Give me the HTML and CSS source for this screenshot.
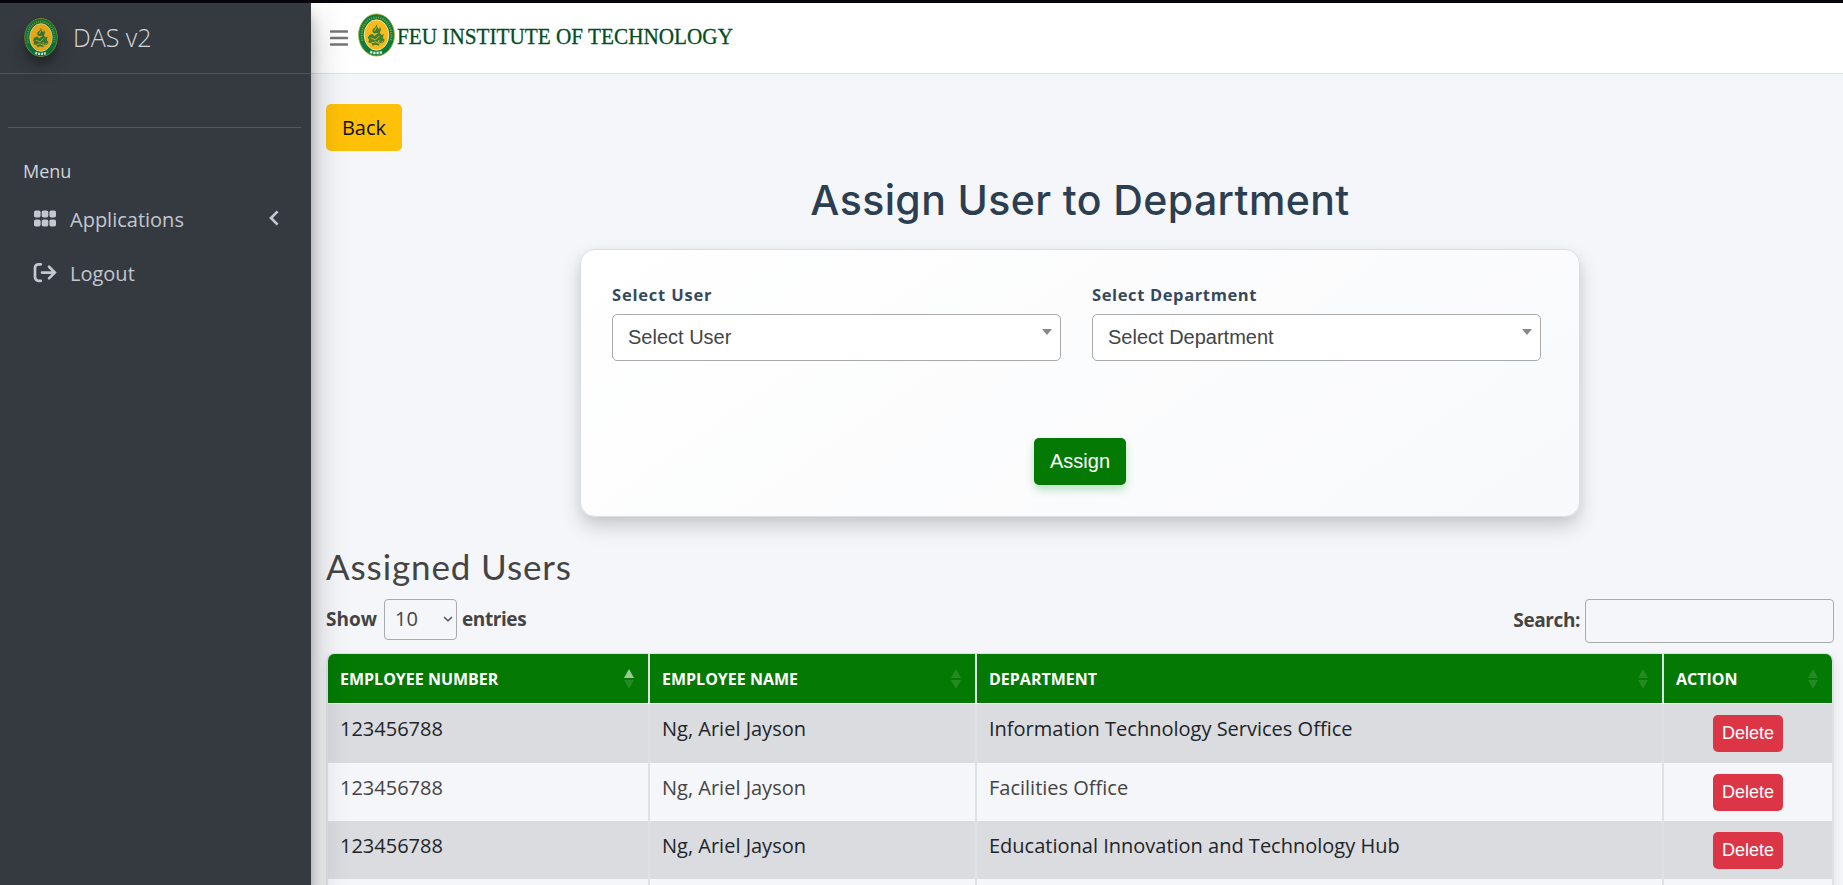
FILE: index.html
```html
<!DOCTYPE html>
<html lang="en">
<head>
<meta charset="utf-8">
<title>DAS v2</title>
<link rel="stylesheet" href="styles.css">
</head>
<body>
<svg width="0" height="0" class="defs">
  <symbol id="seal" viewBox="0 0 38 44">
    <ellipse cx="19" cy="22" rx="18.400" ry="21.600" fill="#0b7d3f" stroke="#a9a52b" stroke-width=".8"/>
    <path d="M4.500 28C1.500 16 8 4 19 4s17.500 12 14.500 24" fill="none" stroke="#b5a72c" stroke-width="2.200" stroke-dasharray="1.300 1.100" opacity=".7"/>
    <ellipse cx="19" cy="22" rx="12.600" ry="15.600" fill="#fbb91a" stroke="#f3e6a0" stroke-width="1"/>
    <path d="M18.500 11c2 2 1 4 3 5 1-1 1-2 .5-3 2.500 3 1.500 5.500-.5 7l-5 .500c-3-2-1.500-5 .5-6 1.500-1 1.500-1.500 1.500-3.500z" fill="#3c8235"/>
    <path d="M11.500 22l3.500-1 2 2 5-4 2 3 2.500-1-1 4 2 2-2 3.500h-3l-1 2.500-3.500-1-3 1-1-2.500-3.500-1 1-2.500-1.500-2z" fill="#3c8235"/>
    <path d="M13 25l5 2 4-4M14 30l4-1 4 2M19 14l-2 4M22 27a2 2 0 1 0 3 1" stroke="#f0b41c" fill="none"/>
    <path d="M12.500 39.300q6.500 2.400 13 0" stroke="#e4efd9" stroke-width="2.600" stroke-dasharray="2.300 1" fill="none"/>
  </symbol>
</svg>
<div class="topline"></div>
<div class="app">
  <aside class="sidebar">
    <div class="brand"><svg class="brand-seal"><use href="#seal"/></svg><span class="brand-name">DAS v2</span></div>
    <div class="user-panel"></div>
    <div class="menu-head">Menu</div>
    <nav class="menu">
      <a class="menu-item">
        <svg class="mi" viewBox="0 0 25 25"><g fill="#c2c7d0"><rect x="2" y="3.500" width="6.600" height="7" rx="1.800"/><rect x="9.700" y="3.500" width="6.600" height="7" rx="1.800"/><rect x="17.400" y="3.500" width="6.600" height="7" rx="1.800"/><rect x="2" y="12.500" width="6.600" height="7" rx="1.800"/><rect x="9.700" y="12.500" width="6.600" height="7" rx="1.800"/><rect x="17.400" y="12.500" width="6.600" height="7" rx="1.800"/></g></svg>
        <span>Applications</span>
        <svg class="chev" viewBox="0 0 10 16"><path d="M8.600 1.400L2 8l6.600 6.600" fill="none" stroke="#c2c7d0" stroke-width="2.700"/></svg>
      </a>
      <a class="menu-item">
        <svg class="mi" viewBox="0 0 25 25"><g fill="none" stroke="#c2c7d0" stroke-width="2.700" stroke-linecap="round"><path d="M8.800 3.300H6.500A3.500 3.500 0 0 0 3 6.800v9.500a3.500 3.500 0 0 0 3.500 3.500h2.300"/><path d="M10 11.600h12M17 5.800l5.800 5.800L17 17.400"/></g></svg>
        <span>Logout</span>
      </a>
    </nav>
  </aside>
  <div class="page">
    <header class="navbar">
      <svg class="burger" viewBox="0 0 18 16"><path d="M1 1.500h16M1 8h16M1 14.500h16" stroke="#757575" stroke-width="2.600" stroke-linecap="round"/></svg>
      <svg class="nav-seal"><use href="#seal"/></svg>
      <svg class="wordmark" viewBox="0 0 344 40"><text x="0" y="29" textLength="336" lengthAdjust="spacingAndGlyphs">FEU INSTITUTE OF TECHNOLOGY</text></svg>
    </header>
    <main class="content">
      <button class="btn-back">Back</button>
      <h2 class="title">Assign User to Department</h2>
      <section class="card">
        <div class="fields">
          <div class="field"><label class="label">Select User</label><div class="select2"><span>Select User</span><i class="caret"></i></div></div>
          <div class="field"><label class="label dept">Select Department</label><div class="select2"><span>Select Department</span><i class="caret"></i></div></div>
        </div>
        <button class="btn-assign">Assign</button>
      </section>
      <h3 class="subtitle">Assigned Users</h3>
      <div class="controls">
        <div class="length"><span class="show">Show</span><div class="pick"><span>10</span><svg width="10" height="6" viewBox="0 0 10 6"><path d="M1 1l4 3.800L9 1" fill="none" stroke="#495057" stroke-width="1.400"/></svg></div><span class="entries">entries</span></div>
        <div class="search"><span>Search:</span><input class="search-input" type="text"></div>
      </div>
      <div class="table">
        <div class="tr head">
          <div class="th"><span>EMPLOYEE NUMBER</span><svg class="sort asc" viewBox="0 0 10 20"><path class="up" d="M5 0l5 9H0z"/><path d="M5 20l5-9H0z"/></svg></div>
          <div class="th"><span>EMPLOYEE NAME</span><svg class="sort" viewBox="0 0 10 20"><path class="up" d="M5 0l5 9H0z"/><path d="M5 20l5-9H0z"/></svg></div>
          <div class="th"><span>DEPARTMENT</span><svg class="sort" viewBox="0 0 10 20"><path class="up" d="M5 0l5 9H0z"/><path d="M5 20l5-9H0z"/></svg></div>
          <div class="th"><span>ACTION</span><svg class="sort" viewBox="0 0 10 20"><path class="up" d="M5 0l5 9H0z"/><path d="M5 20l5-9H0z"/></svg></div>
        </div>
        <div class="tr odd first"><div class="td">123456788</div><div class="td">Ng, Ariel Jayson</div><div class="td">Information Technology Services Office</div><div class="td act"><button class="btn-del">Delete</button></div></div>
        <div class="tr"><div class="td">123456788</div><div class="td">Ng, Ariel Jayson</div><div class="td">Facilities Office</div><div class="td act"><button class="btn-del">Delete</button></div></div>
        <div class="tr odd"><div class="td">123456788</div><div class="td">Ng, Ariel Jayson</div><div class="td">Educational Innovation and Technology Hub</div><div class="td act"><button class="btn-del">Delete</button></div></div>
        <div class="tr"><div class="td"></div><div class="td"></div><div class="td"></div><div class="td"></div></div>
      </div>
    </main>
  </div>
</div>
</body>
</html>
```
FILE: styles.css
```css
* { box-sizing: border-box; }
body { margin: 0; height: 885px; overflow: hidden; background: #f4f6f9; font-family: "Open Sans", sans-serif; font-size: 20px; color: #444; }
.defs { position: absolute; }
.topline { height: 3px; background: #07050b; }
.app { display: grid; grid-template-columns: 311px 1fr; height: 882px; overflow: hidden; }
button { border: 0; padding: 0; border-radius: 5px; font-family: "Liberation Sans", Arial, sans-serif; }

.sidebar { position: relative; z-index: 2; background: #343a40; color: #c2c7d0; box-shadow: 0 17px 35px rgba(0,0,0,.25), 0 12px 12px rgba(0,0,0,.22); }
.brand { height: 71px; border-bottom: 1px solid #4b545c; display: flex; align-items: center; padding: 0 0 2px 24px; gap: 15px; }
.brand-seal { width: 34px; height: 39px; border-radius: 50%; filter: brightness(.9); box-shadow: 0 12px 24px rgba(0,0,0,.19), 0 7px 7px rgba(0,0,0,.23); }
.brand-name { font-size: 25px; font-weight: 300; color: rgba(255,255,255,.8); line-height: 36px; }
.user-panel { height: 54px; margin: 0 10px 0 8px; border-bottom: 1px solid #4f5962; }
.menu-head { padding: 30px 0 0 23px; height: 64px; font-size: 18px; line-height: 26px; color: #d0d4db; }
.menu-item { display: flex; align-items: center; height: 54px; padding: 0 32px; }
.mi { width: 25px; height: 25px; margin-right: 13px; }
.chev { width: 10px; height: 16px; margin: 0 0 2px auto; }

.page { min-width: 0; }
.navbar { height: 71px; background: #fff; border-bottom: 1px solid #dee2e6; display: flex; align-items: center; padding: 0 0 7px 19px; }
.burger { width: 18px; height: 16px; margin-top: 6px; }
.nav-seal { width: 37px; height: 44px; margin-left: 10px; }
.wordmark { width: 344px; height: 40px; margin-left: 2px; overflow: visible; }
.wordmark text { font-family: "Liberation Serif", serif; font-size: 22.5px; fill: #044d24; stroke: #044d24; stroke-width: .3; }

.content { padding: 30px 9px 0 15px; }
.btn-back { display: block; width: 76px; height: 47px; background: #ffc107; color: #111; font-family: "Open Sans", sans-serif; font-size: 20px; }
.title { margin: 24px 0 0; height: 74px; line-height: 50px; text-align: center; font-family: Inter, sans-serif; font-weight: 500; font-size: 41px; letter-spacing: .4px; color: #2c3e50; }
.card { width: 1000px; height: 268px; margin: 0 auto; border: 1px solid #dcdfe2; border-radius: 15px; padding: 31px 31px 0; background: linear-gradient(145deg, #fff, #f8f9fb); box-shadow: 0 10px 20px rgba(0,0,0,.17), 0 2px 10px rgba(0,0,0,.05); }
.fields { display: grid; grid-template-columns: 449px 449px; gap: 31px; }
.label { display: block; height: 33px; line-height: 27px; font-weight: 700; font-size: 16.500px; color: #34495e; letter-spacing: .8px; }
.dept { letter-spacing: .62px; }
.select2 { height: 47px; border: 1px solid #aaa; border-radius: 5px; background: #fff; display: flex; justify-content: space-between; padding: 11px 8px 0 15px; font-family: "Liberation Sans", Arial, sans-serif; line-height: 23px; }
.caret { width: 0; height: 0; margin-top: 3px; border: 5px solid transparent; border-top: 6px solid #888; border-bottom: 0; }
.btn-assign { display: block; width: 92px; height: 47px; margin: 77px auto 0; background: #047904; color: #fff; font-size: 20px; box-shadow: 0 5px 8px rgba(40,167,69,.3); }
.subtitle { margin: 27px 0 0; height: 55px; line-height: 45px; font-family: Lato, sans-serif; font-weight: 400; font-size: 35px; letter-spacing: .88px; }
.controls { height: 54px; display: flex; justify-content: space-between; align-items: flex-start; font-weight: 700; font-size: 19px; }
.length, .search { display: flex; align-items: center; }
.show, .entries { line-height: 26px; margin-bottom: 1px; }
.entries, .search span { letter-spacing: -.4px; }
.search span { margin-bottom: 2px; }
.pick { width: 73px; height: 41px; margin: 0 5px 0 7px; border: 1px solid #aaa; border-radius: 4px; display: flex; align-items: center; justify-content: space-between; padding: 0 3px 2px 10px; font-weight: 400; font-size: 20px; }
.search-input { width: 249px; height: 44px; margin-left: 5px; border: 1px solid #aaa; border-radius: 4px; background: transparent; }
.table { border: 1px solid #dee2e6; border-width: 1px 2px 0; border-radius: 8px 8px 0 0; overflow: hidden; box-shadow: 0 5px 12px rgba(0,0,0,.08); }
.tr { display: grid; grid-template-columns: 322px 327px 687px 1fr; height: 58px; }
.first { height: 59px; }
.odd { background: #dbdce0; color: #212529; }
.head { height: 50px; background: #047904; color: #fff; border-bottom: 1px solid #fff; }
.th { display: flex; align-items: center; justify-content: space-between; padding: 0 14px 0 12px; font-weight: 700; font-size: 16px; border-right: 2px solid #dee2e6; }
.td { padding: 10px 12px 0; line-height: 30px; border-right: 2px solid #dee2e6; white-space: nowrap; }
.th:last-child, .td:last-child { border-right: 0; }
.sort { width: 10px; height: 20px; fill: #fff; fill-opacity: .13; }
.asc .up { fill-opacity: .6; }
.td.act { padding-top: 11px; }
.btn-del { display: block; width: 70px; height: 37px; margin: 0 auto; background: #dc3545; color: #fff; font-size: 18px; }
```
